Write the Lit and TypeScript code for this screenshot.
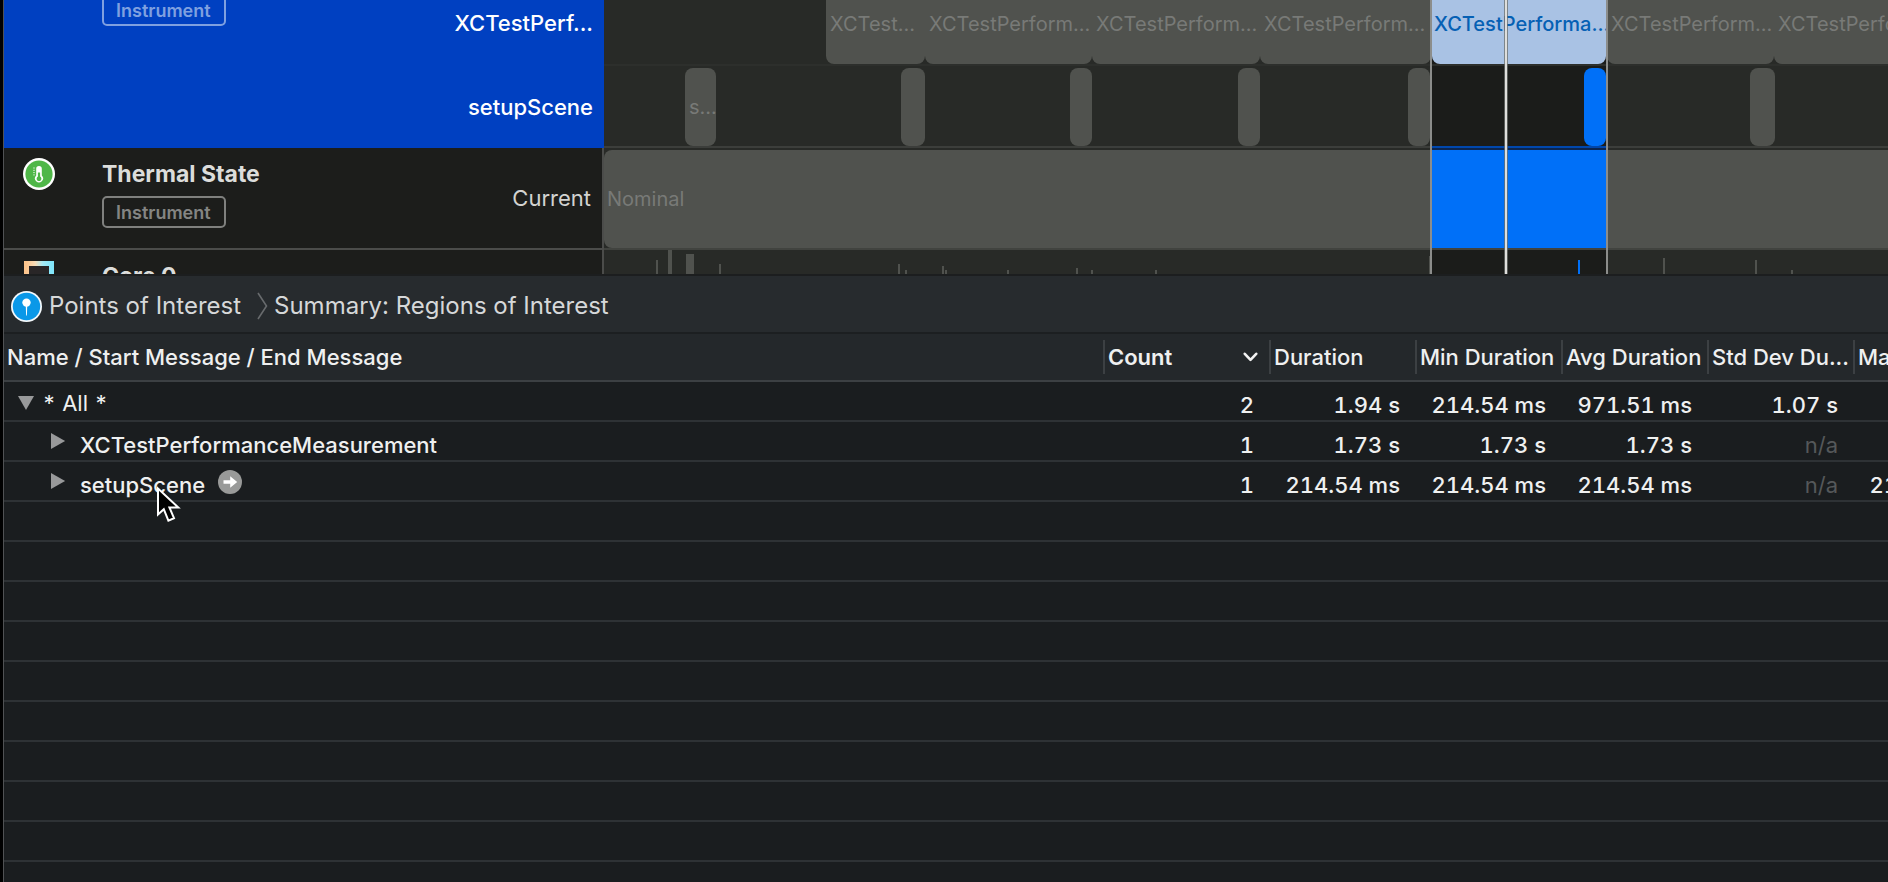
import { LitElement, html, svg, css, nothing } from "lit";
import { customElement } from "lit/decorators.js";
import { classMap } from "lit/directives/class-map.js";
import { styleMap } from "lit/directives/style-map.js";

interface Clip {
  start: number;
  end: number;
  label?: string;
  selected?: boolean;
}

interface Tick {
  at: number;
  height: number;
  width?: number;
  selected?: boolean;
}

interface Region {
  name: string;
  level: number;
  open?: boolean;
  focus?: boolean;
  values: string[];
}

const SELECTION = { start: 828, end: 1002, playhead: 900 };

const MEASUREMENTS: Clip[] = [
  { start: 222, end: 321, label: "XCTest..." },
  { start: 321, end: 488, label: "XCTestPerform..." },
  { start: 488, end: 656, label: "XCTestPerform..." },
  { start: 656, end: 827, label: "XCTestPerform..." },
  { start: 828, end: 1002, label: "XCTestPerforma...", selected: true },
  { start: 1003, end: 1170, label: "XCTestPerform..." },
  { start: 1170, end: 1338, label: "XCTestPerform..." },
];

const SETUPS: Clip[] = [
  { start: 81, end: 112, label: "s..." },
  { start: 297, end: 321 },
  { start: 466, end: 488 },
  { start: 634, end: 656 },
  { start: 804, end: 826 },
  { start: 980, end: 1002, selected: true },
  { start: 1146, end: 1171 },
];

const CORE_TICKS: Tick[] = [
  { at: 52, height: 14 },
  { at: 64, height: 24, width: 4 },
  { at: 82, height: 20, width: 8 },
  { at: 115, height: 10 },
  { at: 294, height: 10 },
  { at: 301, height: 4 },
  { at: 338, height: 8 },
  { at: 341, height: 4 },
  { at: 403, height: 4 },
  { at: 472, height: 6 },
  { at: 487, height: 4 },
  { at: 551, height: 4 },
  { at: 825, height: 18 },
  { at: 974, height: 14, selected: true },
  { at: 1059, height: 16 },
  { at: 1151, height: 14 },
  { at: 1187, height: 4 },
];

const COLUMNS = ["Duration", "Min Duration", "Avg Duration", "Std Dev Du...", "Max Duration"];

const REGIONS: Region[] = [
  { name: "* All *", level: 0, open: true, values: ["2", "1.94 s", "214.54 ms", "971.51 ms", "1.07 s", ""] },
  { name: "XCTestPerformanceMeasurement", level: 1, values: ["1", "1.73 s", "1.73 s", "1.73 s", "n/a", ""] },
  { name: "setupScene", level: 1, focus: true, values: ["1", "214.54 ms", "214.54 ms", "214.54 ms", "n/a", "214.54 ms"] },
];

const base = css`
  * {
    box-sizing: border-box;
  }
  button {
    font: inherit;
    color: inherit;
    background: none;
    border: 0;
    padding: 0;
    display: flex;
    align-items: center;
  }
  svg {
    display: block;
    flex: none;
  }
`;

@customElement("track-headers")
class TrackHeaders extends LitElement {
  static styles = [
    base,
    css`
      :host {
        display: block;
        background: #1c1d1b;
      }
      .track {
        display: grid;
        grid-template-columns: 98px 1fr auto;
        height: 102px;
        padding-right: 11px;
        border-right: 2px solid #4b4c4a;
        border-bottom: 2px solid #4b4c4a;
      }
      .selected {
        height: 148px;
        background: #0040c1;
        border: 0;
      }
      .icon {
        padding: 10px 0 0 19px;
      }
      .info {
        display: flex;
        flex-direction: column;
        align-items: flex-start;
        gap: 8px;
        padding-top: 12px;
      }
      .selected .info {
        padding: 0;
        margin-top: -6px;
      }
      .title {
        margin: 0;
        font-size: 23px;
        line-height: 28px;
        font-weight: 700;
        color: #dcdddb;
      }
      .badge {
        height: 32px;
        padding: 0 13px 0 12px;
        border: 2px solid #7f807e;
        border-radius: 5px;
        font-size: 18px;
        line-height: 30px;
        font-weight: 600;
        color: #848583;
      }
      .selected .badge {
        border-color: #7fa0e0;
        color: #7fa0e0;
      }
      .lanes {
        display: flex;
        flex-direction: column;
        text-align: right;
        font-size: 22px;
        color: #d2d3d1;
      }
      .lane {
        line-height: 100px;
      }
      .selected .lanes {
        color: #fff;
        font-weight: 500;
      }
      .selected .lane:first-child {
        line-height: 46px;
        height: 66px;
      }
      .selected .lane {
        line-height: 82px;
      }
    `,
  ];

  render() {
    return html`
      <section class="track selected">
        <span></span>
        <div class="info"><span class="badge">Instrument</span></div>
        <div class="lanes"><span class="lane">XCTestPerf...</span><span class="lane">setupScene</span></div>
      </section>
      <section class="track">
        <div class="icon">
          <svg width="32" height="32" viewBox="0 0 32 32">
            <circle cx="16" cy="16" r="16" fill="#fff" />
            <circle cx="16" cy="16" r="13.6" fill="#4fb748" />
            <path d="M13.2 17.5V10.8a2.8 2.8 0 0 1 5.6 0v6.7a4 4 0 1 1-5.6 0z" fill="#fff" />
            <path d="M14.9 14.5h2.2v4a2.4 2.4 0 1 1-2.2 0z" fill="#4fb748" />
            <path d="M10.2 10h1.6M10.2 12.3h1.6M10.2 14.6h1.6M10.2 16.9h1.6" stroke="#d5edd3" stroke-width="1" />
          </svg>
        </div>
        <div class="info">
          <h2 class="title">Thermal State</h2>
          <span class="badge">Instrument</span>
        </div>
        <div class="lanes"><span class="lane">Current</span></div>
      </section>
      <section class="track">
        <div class="icon">
          <svg width="32" height="32" viewBox="0 0 32 32">
            <defs>
              <linearGradient id="core" x1="0" x2="1">
                <stop offset="0" stop-color="#fcc48c" />
                <stop offset="0.35" stop-color="#f7dcb8" />
                <stop offset="0.65" stop-color="#a5eaf5" />
                <stop offset="1" stop-color="#82e6fa" />
              </linearGradient>
            </defs>
            <rect x="3.5" y="3.5" width="25" height="25" fill="#292627" stroke="url(#core)" stroke-width="5" />
          </svg>
        </div>
        <div class="info"><h2 class="title">Core 0</h2></div>
        <div class="lanes"></div>
      </section>
    `;
  }
}

@customElement("track-timeline")
class TrackTimeline extends LitElement {
  static styles = [
    base,
    css`
      :host {
        display: block;
        position: relative;
        overflow: hidden;
        background: #282a27;
      }
      .lane {
        position: relative;
        overflow: hidden;
      }
      .measurements {
        height: 66px;
        border-bottom: 2px solid #2d2f2c;
      }
      .setups {
        height: 82px;
        border-bottom: 2px solid #3c3e3b;
      }
      .thermal {
        height: 102px;
        padding-top: 2px;
        border-bottom: 2px solid #41433f;
      }
      .cores {
        height: 24px;
      }
      .clip {
        position: absolute;
        top: 2px;
        bottom: 0;
        padding-left: 4px;
        border-radius: 8px;
        background: #50524e;
        color: #787a77;
        font-size: 20px;
        white-space: nowrap;
      }
      .measurements .clip {
        top: 0;
        line-height: 48px;
        border-radius: 0 0 8px 8px;
      }
      .setups .clip {
        line-height: 78px;
      }
      .clip.selected {
        padding-left: 2px;
        background: #0070f8;
      }
      .measurements .clip.selected {
        background: #a9c2e4;
        color: #0560b4;
        font-weight: 500;
      }
      .state {
        height: 98px;
        padding-left: 3px;
        border-radius: 8px 0 0 8px;
        background: #50524e;
        color: #787a77;
        font-size: 20px;
        line-height: 98px;
      }
      .range {
        position: absolute;
        top: 0;
        bottom: 0;
        background: #1b1c1a;
      }
      .thermal .range {
        top: 2px;
        background: #0070f8;
      }
      .divider {
        position: absolute;
        top: 146px;
        height: 4px;
        background: linear-gradient(#0047ad 50%, #0b2550 50%);
      }
      .tick {
        position: absolute;
        bottom: 0;
        background: #50524e;
      }
      .tick.selected {
        background: #0070f8;
      }
      .edge {
        position: absolute;
        top: 0;
        height: 274px;
        width: 2px;
        background: #8c8d8b;
      }
      .playhead {
        position: absolute;
        top: 0;
        height: 274px;
        width: 4px;
        background: #dededc;
        background-clip: padding-box;
        border: 0 solid rgba(110, 112, 110, 0.75);
        border-width: 0 1px;
      }
    `,
  ];

  private clip(c: Clip) {
    return html`<div
      class=${classMap({ clip: true, selected: !!c.selected })}
      style=${styleMap({ left: `${c.start}px`, width: `${c.end - c.start}px` })}
    >${c.label ?? nothing}</div>`;
  }

  render() {
    const span = styleMap({
      left: `${SELECTION.start}px`,
      width: `${SELECTION.end - SELECTION.start}px`,
    });
    return html`
      <div class="lane measurements">
        <div class="range" style=${span}></div>
        ${MEASUREMENTS.map((c) => this.clip(c))}
      </div>
      <div class="lane setups">
        <div class="range" style=${span}></div>
        ${SETUPS.map((c) => this.clip(c))}
      </div>
      <div class="lane thermal">
        <div class="state">Nominal</div>
        <div class="range" style=${span}></div>
      </div>
      <div class="lane cores">
        <div class="range" style=${span}></div>
        ${CORE_TICKS.map(
          (t) => html`<div
            class=${classMap({ tick: true, selected: !!t.selected })}
            style=${styleMap({ left: `${t.at}px`, width: `${t.width ?? 2}px`, height: `${t.height}px` })}
          ></div>`
        )}
      </div>
      <div class="divider" style=${span}></div>
      <div class="edge" style=${styleMap({ left: `${SELECTION.start - 2}px` })}></div>
      <div class="edge" style=${styleMap({ left: `${SELECTION.end}px` })}></div>
      <div class="playhead" style=${styleMap({ left: `${SELECTION.playhead}px` })}></div>
    `;
  }
}

@customElement("region-table")
class RegionTable extends LitElement {
  static styles = [
    base,
    css`
      :host {
        display: flex;
        flex-direction: column;
        flex: 1;
        overflow: hidden;
      }
      table {
        width: calc(100% + 111px);
        table-layout: fixed;
        border-collapse: separate;
        border-spacing: 0;
        font-size: 22px;
        font-weight: 500;
        color: #eff0f0;
      }
      .count-col {
        width: 166px;
      }
      .value-col {
        width: 146px;
      }
      th {
        height: 48px;
        padding: 0;
        background: #24282b;
        border-bottom: 2px solid #3c4043;
        font-weight: 500;
        text-align: left;
        white-space: nowrap;
      }
      .head {
        display: flex;
        align-items: center;
        justify-content: space-between;
        width: 100%;
        height: 34px;
        padding-left: 3px;
        border-left: 2px solid #3c4043;
      }
      .first {
        border-color: transparent;
        padding-left: 1px;
      }
      .sorted {
        padding-right: 11px;
        font-weight: 600;
      }
      td {
        height: 40px;
        padding: 8px 15px 0 0;
        border-bottom: 2px solid #2e3235;
        line-height: 30px;
        text-align: right;
        white-space: nowrap;
        font-variant-numeric: tabular-nums;
      }
      td.name {
        text-align: left;
        padding: 0;
      }
      .cell {
        display: flex;
        align-items: flex-start;
        height: 38px;
      }
      .label {
        padding-top: 8px;
      }
      .twist {
        height: 38px;
      }
      .focus {
        height: 38px;
        padding-top: 2px;
      }
      .level-0 {
        padding-left: 14px;
        gap: 8px;
        font-weight: 400;
      }
      .level-0 .label {
        padding-top: 6px;
      }
      .level-0 .twist {
        padding-top: 4px;
      }
      .level-1 {
        padding-left: 47px;
        gap: 13px;
      }
      .muted {
        color: #55585a;
        font-weight: 400;
      }
      .rest {
        flex: 1;
        background: repeating-linear-gradient(transparent 0 38px, #2e3235 38px 40px);
      }
    `,
  ];

  render() {
    return html`
      <table>
        <colgroup>
          <col />
          <col class="count-col" />
          ${COLUMNS.map(() => html`<col class="value-col" />`)}
        </colgroup>
        <thead>
          <tr>
            <th><button class="head first">Name / Start Message / End Message</button></th>
            <th aria-sort="descending">
              <button class="head sorted">
                Count
                <svg width="15" height="10" viewBox="0 0 15 10" fill="none" stroke="#f2f2f2" stroke-width="2.6" stroke-linecap="round" stroke-linejoin="round">
                  <path d="M1.8 1.8 7.5 7.8 13.2 1.8" />
                </svg>
              </button>
            </th>
            ${COLUMNS.map((c) => html`<th><button class="head">${c}</button></th>`)}
          </tr>
        </thead>
        <tbody>
          ${REGIONS.map(
            (r) => html`<tr>
              <td class="name">
                <div class="cell level-${r.level}">
                  <button class="twist" aria-expanded=${r.open ? "true" : "false"} aria-label=${r.name}>
                    <svg width="16" height="18" viewBox="0 0 17 18" fill="#98999a">
                      ${r.open ? svg`<path d="M0 1.5h17L8.5 16.5z" />` : svg`<path d="M0 0.5 15 9 0 17.5z" />`}
                    </svg>
                  </button>
                  <span class="label">${r.name}</span>
                  ${r.focus
                    ? html`<button class="focus" aria-label="Focus">
                        <svg width="24" height="24" viewBox="0 0 24 24">
                          <circle cx="12" cy="12" r="12" fill="#999a99" />
                          <path d="M5.5 10.2h6.7V6.2l7 5.8-7 5.8v-4H5.5z" fill="#fff" />
                        </svg>
                      </button>`
                    : nothing}
                </div>
              </td>
              ${r.values.map((v) => html`<td class=${classMap({ muted: v === "n/a" })}>${v}</td>`)}
            </tr>`
          )}
        </tbody>
      </table>
      <div class="rest"></div>
    `;
  }
}

@customElement("app-root")
class AppRoot extends LitElement {
  static styles = [
    base,
    css`
      :host {
        display: flex;
        flex-direction: column;
        position: relative;
        min-height: 100vh;
        box-sizing: border-box;
        padding-left: 3px;
        background: #000;
        overflow: hidden;
        font-family: Inter, "Liberation Sans", sans-serif;
      }
      .window {
        display: flex;
        flex-direction: column;
        flex: 1;
        border-left: 1px solid #505254;
        background: #1a1d1f;
      }
      .tracks {
        display: grid;
        grid-template-columns: 600px 1fr;
        height: 276px;
        overflow: hidden;
        border-bottom: 2px solid #1c1e1f;
      }
      .path {
        display: flex;
        align-items: center;
        height: 58px;
        padding: 4px 0 0 7px;
        background: #272b2e;
        border-bottom: 2px solid #1c1f21;
        font-size: 24px;
        line-height: 28px;
        color: #d6d8d9;
      }
      .crumb {
        gap: 7px;
      }
      .chevron {
        margin: 0 6px 0 16px;
      }
      .cursor {
        position: absolute;
        left: 156px;
        top: 485px;
      }
    `,
  ];

  render() {
    return html`
      <main class="window">
        <div class="tracks">
          <track-headers></track-headers>
          <track-timeline></track-timeline>
        </div>
        <nav class="path">
          <button class="crumb">
            <svg width="31" height="31" viewBox="0 0 31 31">
              <circle cx="15.5" cy="15.5" r="15.5" fill="#f4f9fc" />
              <circle cx="15.5" cy="15.5" r="13.7" fill="#0a98e8" />
              <circle cx="15.5" cy="11.6" r="4.2" fill="#fff" />
              <path d="M14.8 15h1.4l-.3 9.6h-.8z" fill="#fff" />
            </svg>
            Points of Interest
          </button>
          <svg class="chevron" width="11" height="28" viewBox="0 0 11 28" fill="none" stroke="#686b6d" stroke-width="1.6">
            <path d="M1 1 9.5 14 1 27" />
          </svg>
          <button class="crumb">Summary: Regions of Interest</button>
        </nav>
        <region-table></region-table>
      </main>
      <svg class="cursor" width="26" height="38" viewBox="0 0 26 38">
        <path d="M2 3.5V29.5L7.8 24.2 12.4 35.6 18 33.2 13.4 22.4H22.3z" fill="#000" stroke="#fff" stroke-width="2" />
      </svg>
    `;
  }
}
